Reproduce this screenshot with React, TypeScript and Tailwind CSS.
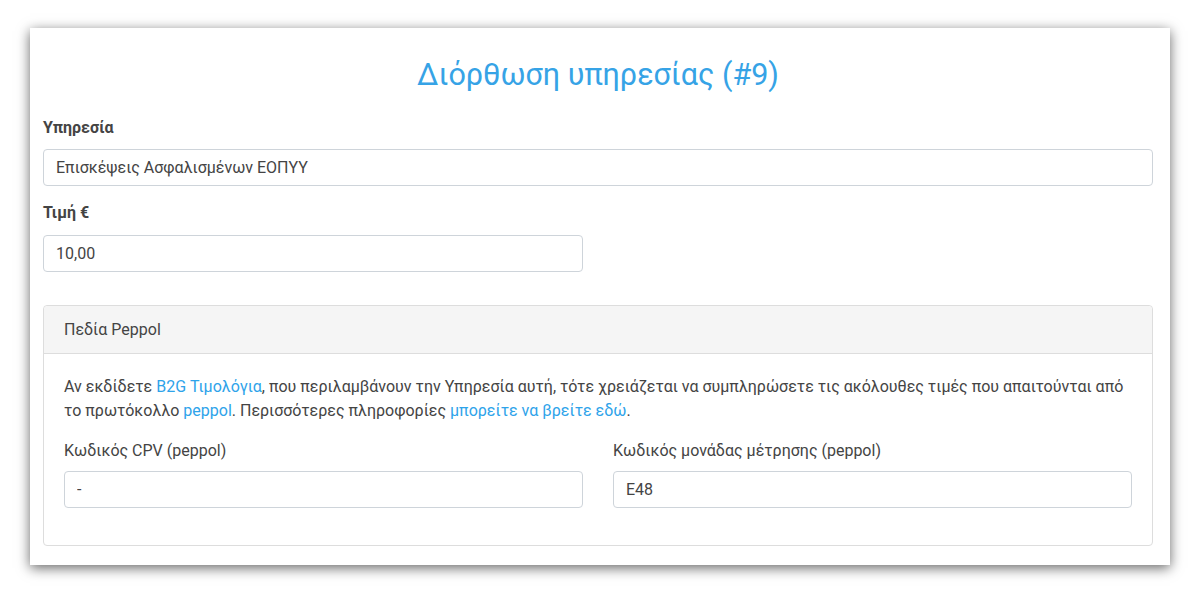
export default function App() {
  return (
    <div className="min-h-[597px] bg-white pt-[28px] px-[30px] font-['Roboto',sans-serif] text-[16px] text-[#444]">
      <div className="bg-white pl-[13px] pr-[17px] pb-[19px] shadow-[0_3px_12px_rgba(0,0,0,0.6)]">
        <h1 className="pt-[27px] pb-[23px] text-center text-[30.5px] leading-[40px] text-[#36a3e6]">
          Διόρθωση υπηρεσίας (#9)
        </h1>

        <div className="flex flex-col">
          <label className="font-bold text-[#444] leading-[20px]">Υπηρεσία</label>
          <input
            readOnly
            value="Επισκέψεις Ασφαλισμένων ΕΟΠΥΥ"
            className="mt-[11px] h-[37px] w-full rounded border border-[#ced4da] px-[12px] text-[#444] outline-none"
          />
        </div>

        <div className="mt-[17px] flex flex-col">
          <label className="font-bold text-[#444] leading-[20px]">Τιμή €</label>
          <input
            readOnly
            value="10,00"
            className="mt-[12px] h-[37px] w-[540px] rounded border border-[#ced4da] px-[12px] text-[#444] outline-none"
          />
        </div>

        <div className="mt-[33px] rounded border border-[#ddd]">
          <div className="h-[48px] flex items-center border-b border-[#ddd] bg-[#f5f5f5] px-[20px] rounded-t">
            Πεδία Peppol
          </div>
          <div className="px-[20px] pt-[21px] pb-[37px]">
            <p className="leading-[24px]">
              Αν εκδίδετε <a className="text-[#2ea3ea]">B2G Τιμολόγια</a>, που περιλαμβάνουν την Υπηρεσία αυτή, τότε
              χρειάζεται να συμπληρώσετε τις ακόλουθες τιμές που απαιτούνται από το πρωτόκολλο{" "}
              <a className="text-[#2ea3ea]">peppol</a>. Περισσότερες πληροφορίες{" "}
              <a className="text-[#2ea3ea]">μπορείτε να βρείτε εδώ</a>.
            </p>
            <div className="mt-[18px] grid grid-cols-2 gap-[30px]">
              <div className="flex flex-col">
                <label className="leading-[20px]">Κωδικός CPV (peppol)</label>
                <input
                  readOnly
                  value="-"
                  className="mt-[10px] h-[37px] w-full rounded border border-[#ced4da] px-[12px] text-[#444] outline-none"
                />
              </div>
              <div className="flex flex-col">
                <label className="leading-[20px]">Κωδικός μονάδας μέτρησης (peppol)</label>
                <input
                  readOnly
                  value="E48"
                  className="mt-[10px] h-[37px] w-full rounded border border-[#ced4da] px-[12px] text-[#444] outline-none"
                />
              </div>
            </div>
          </div>
        </div>
      </div>
    </div>
  )
}
